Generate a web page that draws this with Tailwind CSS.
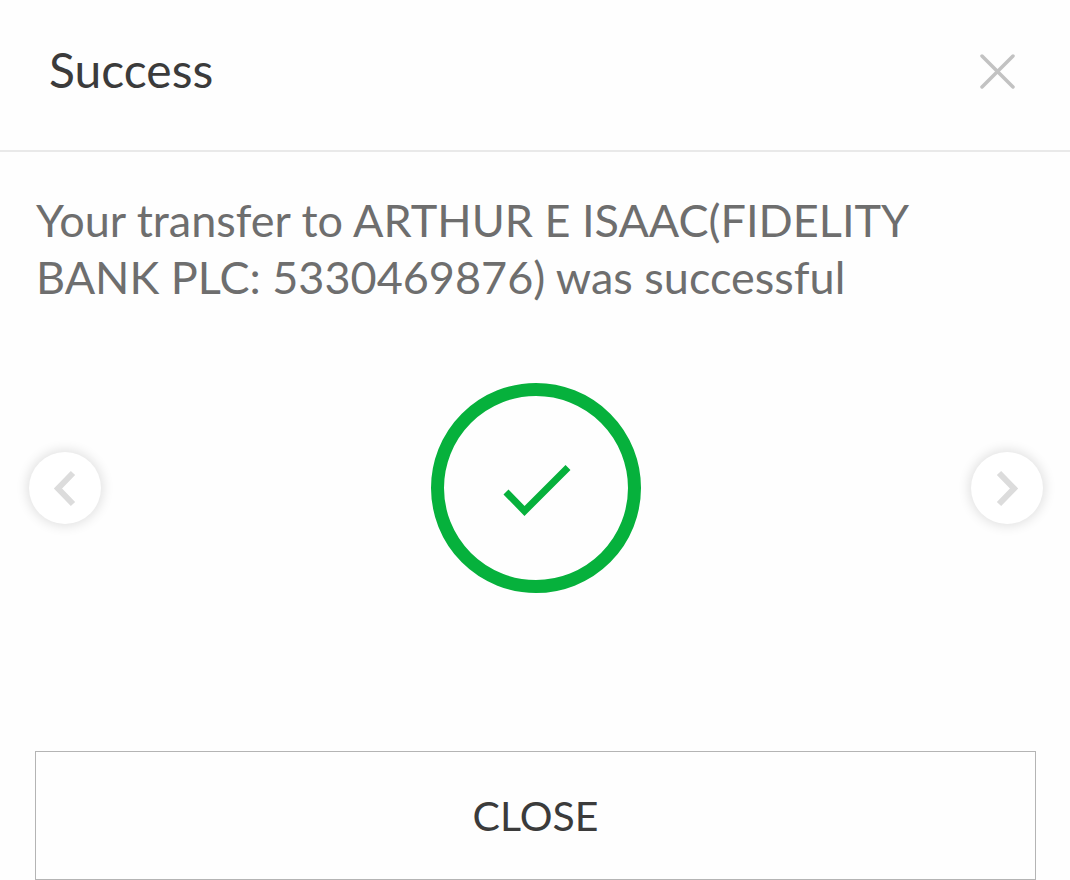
<!DOCTYPE html>
<html lang="en">
<head>
    <meta charset="UTF-8">
    <meta name="viewport" content="width=device-width, initial-scale=1.0">
    <title>Success</title>
    <script src="https://cdn.jsdelivr.net/npm/@tailwindcss/browser@4"></script>
</head>
<body class="bg-[#fefefe] font-['Lato','Open_Sans',sans-serif]">
<div role="dialog" aria-labelledby="dialogTitle" class="flex min-h-screen flex-col">
    <!-- Header -->
    <header class="flex h-38 items-center justify-between border-b-2 border-[#e9e9e9] pr-[54px] pb-[10px] pl-[49px]">
        <h1 id="dialogTitle" class="text-[48px] leading-[56px] text-[#3b3b3b]">Success</h1>
        <button type="button" aria-label="Dismiss" class="text-[#c2c2c2]">
            <svg class="size-[37px]" viewBox="0 0 37 37" fill="none" stroke="currentColor" stroke-width="3.500" stroke-linecap="round">
                <path d="M3 4L34 35M34 4L3 35"/>
            </svg>
        </button>
    </header>

    <!-- Message -->
    <p class="px-9 pt-10 text-[45px] leading-[57px] text-[#6e6e6e]">Your transfer to ARTHUR E ISAAC(FIDELITY BANK PLC: 5330469876) was successful</p>

    <!-- Status -->
    <div class="flex flex-1 items-center justify-between pt-10 pr-[27px] pb-[122px] pl-[29px]">
        <button type="button" aria-label="Previous" class="flex size-[72px] items-center justify-center rounded-full bg-white text-[#dcdcdc] shadow-[0_0_12px_2px_rgba(0,0,0,0.12)]">
            <svg class="size-10" viewBox="0 0 40 40" fill="none" stroke="currentColor" stroke-width="6">
                <path d="M28 5L13 20.500L28 36"/>
            </svg>
        </button>
        <svg class="size-[210px] text-[#06b13c]" viewBox="0 0 210 210" fill="none" stroke="currentColor" role="img" aria-label="Successful">
            <circle cx="105" cy="105" r="98.500" stroke-width="13"/>
            <path d="M75 109L93.500 128L137 84.500" stroke-width="7"/>
        </svg>
        <button type="button" aria-label="Next" class="flex size-[72px] items-center justify-center rounded-full bg-white text-[#dcdcdc] shadow-[0_0_12px_2px_rgba(0,0,0,0.12)]">
            <svg class="size-10" viewBox="0 0 40 40" fill="none" stroke="currentColor" stroke-width="6">
                <path d="M12 5L27 20.500L12 36"/>
            </svg>
        </button>
    </div>

    <!-- Footer -->
    <footer class="flex pr-[34px] pl-[35px]">
        <button type="button" class="h-[129px] flex-1 border border-[#b4b4b4] text-[41px] leading-[56px] text-[#3b3b3b]">CLOSE</button>
    </footer>
</div>
</body>
</html>
